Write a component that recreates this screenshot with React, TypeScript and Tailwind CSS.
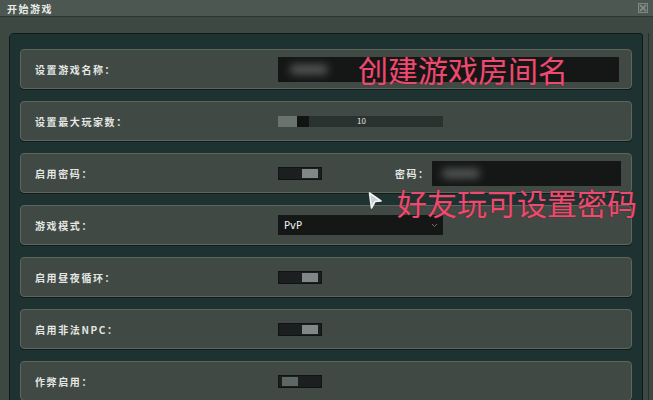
import React from "react";

const labelFont = { fontFamily: '"Noto Sans CJK SC", "Noto Sans", sans-serif' };

function Toggle({ on }: { on: boolean }) {
  return (
    <div className="w-[44px] h-[13px] bg-[#1c1f1f] border border-[#111313] flex items-center px-[3px]" >
      <div className={on ? "ml-auto w-[16px] h-[9px] bg-[#7f8886]" : "w-[16px] h-[9px] bg-[#5d6864]"} />
    </div>
  );
}

function Row({ label, children }: { label: string; children?: React.ReactNode }) {
  return (
    <div className="h-[40px] shrink-0 rounded-[4px] border border-[#5b655f] bg-[#404943] shadow-[0_1px_0_#121b1a] flex items-center pl-[14px]">
      <div
        className="w-[243px] shrink-0 text-[10px] font-bold tracking-[1.6px] text-[#e4e7e4]"
        style={labelFont}
      >
        {label}
      </div>
      {children}
    </div>
  );
}

function BlurInput({ width, blobLeft }: { width: string; blobLeft: string }) {
  return (
    <div className={`relative h-[25px] bg-[#151717] overflow-hidden ${width}`}>
      <div className={`absolute top-[8px] h-[9px] w-[38px] rounded-full bg-[#5a5c5c] blur-[4px] ${blobLeft}`} />
    </div>
  );
}

export default function App() {
  return (
    <div className="relative w-[653px] h-[400px] overflow-hidden bg-[#3e4843] flex flex-col" style={labelFont}>
      {/* window title bar */}
      <div className="h-[17px] shrink-0 bg-[#4d5752] border-b border-[#2c3532] flex items-center pl-[7px] pr-[4px]">
        <span className="text-[10px] font-bold tracking-[1.5px] text-[#e8ebe8]">开始游戏</span>
        <div className="ml-auto mr-[1px] w-[10px] h-[10px] border border-[#7d8783] bg-[#55605b] flex items-center justify-center">
          <svg width="8" height="8" viewBox="0 0 8 8">
            <path d="M1 1L7 7M7 1L1 7" stroke="#8d9793" strokeWidth="1.2" />
          </svg>
        </div>
      </div>

      <div className="flex-1 flex flex-row pt-[16px] pl-[9px]">
        {/* settings panel */}
        <div className="flex-1 rounded-tl-[5px] rounded-tr-[3px] border border-[#0f1a19] bg-[#1e3331] pt-[15px] pl-[10px] pr-[10px] flex flex-col gap-[12px]">
          <Row label="设置游戏名称：">
            <BlurInput width="w-[341px]" blobLeft="left-[12px]" />
          </Row>

          <Row label="设置最大玩家数：">
            <div className="relative w-[165px] h-[11px] bg-[#2a3230] flex">
              <div className="w-[19px] h-full bg-[#69746f]" />
              <div className="w-[12px] h-full bg-[#101513]" />
              <div className="absolute inset-0 flex items-center justify-center pl-[2px] text-[8px] leading-none text-[#e0e4e2]">
                10
              </div>
            </div>
          </Row>

          <Row label="启用密码：">
            <Toggle on />
            <div className="ml-[73px] w-[37px] text-[10px] font-bold tracking-[1.5px] text-[#e4e7e4]">密码：</div>
            <BlurInput width="w-[189px]" blobLeft="left-[10px]" />
          </Row>

          <Row label="游戏模式：">
            <div className="w-[165px] h-[20px] bg-[#151717] flex items-center pl-[6px] pr-[5px]">
              <span className="text-[10px] text-[#eef0ee]" style={{ fontFamily: '"DejaVu Sans", sans-serif' }}>PvP</span>
              <svg className="ml-auto" width="7" height="5" viewBox="0 0 7 5">
                <path d="M1 1L3.5 3.5L6 1" stroke="#6e7673" strokeWidth="1" fill="none" />
              </svg>
            </div>
          </Row>

          <Row label="启用昼夜循环：">
            <Toggle on />
          </Row>

          <Row label="启用非法NPC：">
            <Toggle on />
          </Row>

          <Row label="作弊启用：">
            <Toggle on={false} />
          </Row>
        </div>

        {/* window right frame */}
        <div className="w-[10px] shrink-0 flex">
          <div className="ml-[5px] w-[1px] h-full bg-[#28302d]" />
        </div>
      </div>

      {/* annotations over the dialog */}
      <div
        className="absolute left-[358px] top-[50px] text-[30px] leading-[38px] text-[#ea4b6e] [text-shadow:0_0_1px_#5a1020]"
        style={labelFont}
      >
        创建游戏房间名
      </div>
      <div
        className="absolute left-[397px] top-[183px] text-[30px] leading-[38px] text-[#ea4b6e] [text-shadow:0_0_1px_#5a1020]"
        style={labelFont}
      >
        好友玩可设置密码
      </div>

      {/* mouse pointer */}
      <svg className="absolute left-[367px] top-[191px]" width="16" height="19" viewBox="0 0 16 19">
        <path d="M2.5 2L14 10L8 10.5L4.5 17Z" fill="#c9cece" stroke="#f2f4f4" strokeWidth="1.6" strokeLinejoin="round" />
      </svg>
    </div>
  );
}
